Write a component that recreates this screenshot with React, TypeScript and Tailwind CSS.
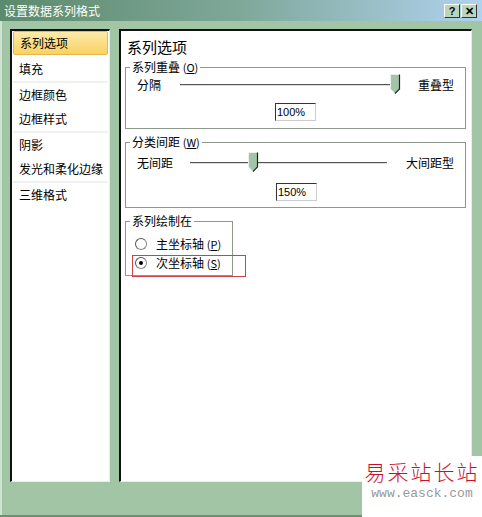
import React from "react";

const font = { fontFamily: '"Noto Sans CJK SC", "Liberation Sans", sans-serif' };

function Thumb() {
  return (
    <svg width="11" height="20" viewBox="0 0 11 20" className="block">
      <path d="M0.5 0.5 H9.5 V15 L5 19.5 L0.5 15 Z" fill="#a3c4a8" stroke="#e8f2ea" />
      <path d="M9.5 0.5 V15 L5 19.5" fill="none" stroke="#222" strokeWidth="1.2" />
    </svg>
  );
}

function Slider({ left, right, lineW, thumbX, lineMl, rightMl }: { left: string; right: string; lineW: number; thumbX: number; lineMl: number; rightMl: number }) {
  return (
    <div className="flex items-center h-[22px] text-[12px] text-black whitespace-nowrap">
      <span className="ml-[11px]">{left}</span>
      <div className="relative h-[22px]" style={{ width: lineW, marginLeft: lineMl }}>
        <div className="absolute left-0 right-0 top-[10px] h-[2px] bg-[#555] border-b border-[#ddd]" />
        <div className="absolute top-0" style={{ left: thumbX }}>
          <Thumb />
        </div>
      </div>
      <span style={{ marginLeft: rightMl }}>{right}</span>
    </div>
  );
}

function Spin({ value, ml }: { value: string; ml: number }) {
  return (
    <div
      className="h-[18px] w-[41px] border-l border-t border-l-[#333] border-t-[#333] border-r border-b border-r-[#ccc] border-b-[#ccc] bg-white text-[11px] leading-[16px] pl-[1px]"
      style={{ marginLeft: ml, fontFamily: '"Liberation Sans", sans-serif' }}
    >
      {value}
    </div>
  );
}

function Radio({ checked }: { checked?: boolean }) {
  return (
    <div className="w-[12px] h-[12px] rounded-full border border-[#888] border-l-[#555] border-t-[#555] bg-white flex items-center justify-center">
      {checked && <div className="w-[4px] h-[4px] rounded-full bg-black" />}
    </div>
  );
}

export default function App() {
  const items = [
    { t: "系列选项", sel: true },
    { t: "填充", sep: true },
    { t: "边框颜色" },
    { t: "边框样式", sep: true },
    { t: "阴影" },
    { t: "发光和柔化边缘", sep: true },
    { t: "三维格式" },
  ];
  return (
    <div className="relative w-[482px] h-[517px] bg-[#a2c5a6] overflow-hidden" style={font}>
      <div className="absolute left-0 top-0 bottom-0 w-[2px] bg-[#cfe3d1]" />
      <div className="absolute left-0 right-0 bottom-0 h-[2px] bg-[#6f8f74]" />
      {/* title bar */}
      <div className="relative h-[21px] flex items-center justify-between bg-gradient-to-r from-[#5c8a6c] via-[#7fa89a] to-[#b0d2ee] pl-[4px] pr-[5px]">
        <span className="text-white text-[12px] leading-none">设置数据系列格式</span>
        <div className="flex gap-[1px]">
          <div className="w-[16px] h-[14px] bg-[#b9d6bc] border border-t-white border-l-white border-r-[#333] border-b-[#333] text-[11px] leading-[12px] font-bold text-center" style={{ fontFamily: '"Liberation Sans", sans-serif' }}>?</div>
          <div className="w-[16px] h-[14px] bg-[#b9d6bc] border border-t-white border-l-white border-r-[#333] border-b-[#333] text-[11px] leading-[12px] font-bold text-center" style={{ fontFamily: '"Liberation Sans", sans-serif' }}>✕</div>
        </div>
      </div>
      {/* body */}
      <div className="flex pl-[10px] pt-[8px] gap-[9px]">
        {/* list */}
        <div className="w-[100px] h-[453px] bg-white border-l-2 border-t-2 border-l-[#111] border-t-[#111] border-r border-b border-r-[#e6efe6] border-b-[#e6efe6] px-[1px]">
          {items.map((it, i) => (
            <div key={i}>
              <div
                className={
                  "h-[24px] flex items-center pl-[6px] text-[12px] text-black whitespace-nowrap " +
                  (it.sel ? "bg-gradient-to-b from-[#fdeba8] to-[#f8d160] border border-[#e4b850] rounded-[2px] mb-[2px]" : "")
                }
              >
                {it.t}
              </div>
              {it.sep && <div className="h-[2px] bg-[#f1f1f1]" />}
            </div>
          ))}
        </div>
        {/* right panel */}
        <div className="w-[353px] h-[453px] bg-white border-l-2 border-t-2 border-l-[#111] border-t-[#111] border-r border-b border-r-[#e6efe6] border-b-[#e6efe6] pl-[4px] pt-[6px]">
          <div className="text-[15px] leading-[20px] text-black pl-[2px]">系列选项</div>
          {/* group 1 */}
          <div className="relative mt-[10px] w-[341px] h-[62px] border border-[#8a9a8c] pt-[6px]">
            <div className="absolute left-[4px] top-[-9px] bg-white px-[2px] text-[12px] leading-[16px]">系列重叠 <span className="text-[11px]">(<u>O</u>)</span></div>
            <Slider left="分隔" right="重叠型" lineMl={19} lineW={220} thumbX={210} rightMl={18} />
            <div className="mt-[7px]"><Spin value="100%" ml={149} /></div>
          </div>
          {/* group 2 */}
          <div className="relative mt-[13px] w-[341px] h-[66px] border border-[#8a9a8c] pt-[9px]">
            <div className="absolute left-[4px] top-[-9px] bg-white px-[2px] text-[12px] leading-[16px]">分类间距 <span className="text-[11px]">(<u>W</u>)</span></div>
            <Slider left="无间距" right="大间距型" lineMl={17} lineW={197} thumbX={58} rightMl={19} />
            <div className="mt-[9px]"><Spin value="150%" ml={150} /></div>
          </div>
          {/* group 3 */}
          <div className="relative mt-[13px] w-[108px] h-[55px] border border-[#8a9a8c] pt-[13px]">
            <div className="absolute left-[4px] top-[-9px] bg-white px-[2px] text-[12px] leading-[16px]">系列绘制在</div>
            <div className="flex items-center h-[18px] pl-[9px] gap-[9px] text-[12px] whitespace-nowrap">
              <Radio />
              <span>主坐标轴 <span className="text-[11px]">(<u>P</u>)</span></span>
            </div>
            <div className="flex items-center h-[18px] pl-[9px] gap-[9px] text-[12px] mt-[1px] whitespace-nowrap">
              <Radio checked />
              <span>次坐标轴 <span className="text-[11px]">(<u>S</u>)</span></span>
            </div>
          </div>
        </div>
      </div>
      {/* red highlight */}
      <div className="absolute left-[132px] top-[255px] w-[114px] h-[22px] border border-[#d0404a]" />
      {/* watermark */}
      <div className="absolute left-[362px] top-[456px] w-[120px] h-[61px] bg-white flex flex-col items-center pt-[4px]">
        <div className="text-[#c8102e] text-[21px] leading-[23px] tracking-[2px] font-light" style={{ fontFamily: '"Noto Sans CJK SC", serif' }}>易采站长站</div>
        <div className="text-[#999] text-[13px] leading-[14px] mt-[4px]" style={{ fontFamily: '"Liberation Mono", monospace' }}>www.easck.com</div>
      </div>
    </div>
  );
}
